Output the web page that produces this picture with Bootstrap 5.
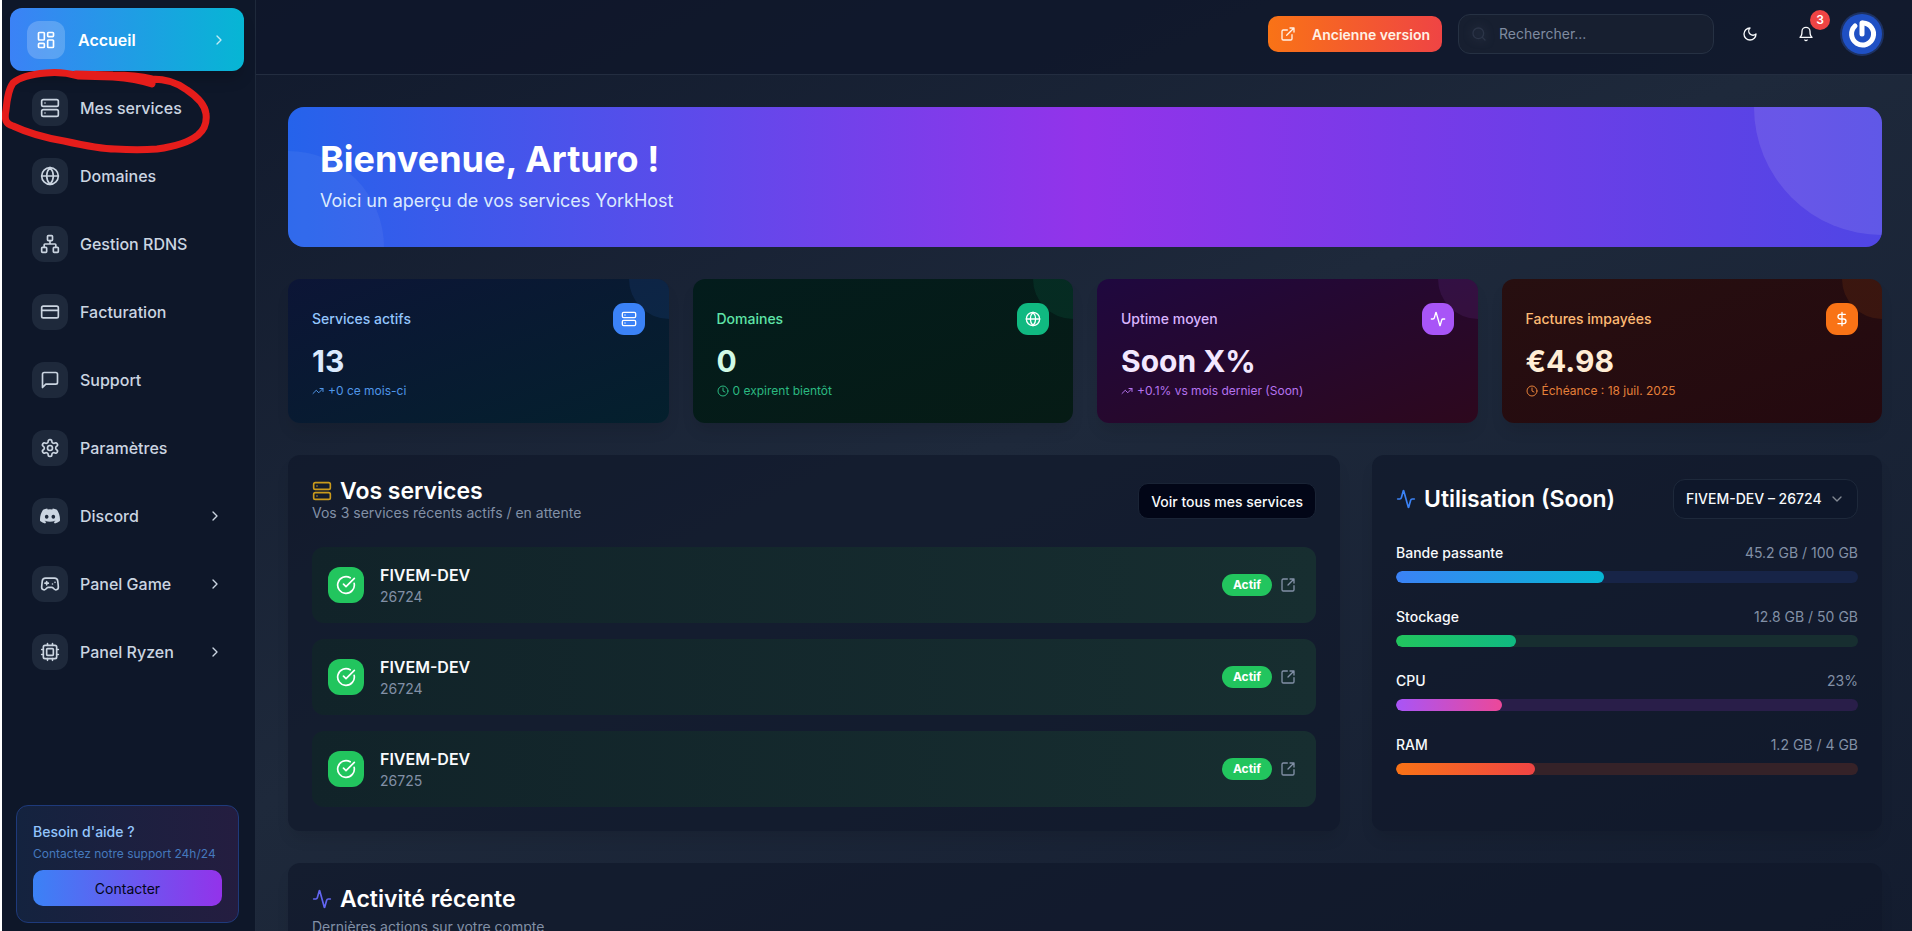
<!DOCTYPE html>
<html lang="fr" data-bs-theme="dark">
<head>
<meta charset="utf-8">
<meta name="viewport" content="width=device-width, initial-scale=1">
<title>YorkHost – Accueil</title>
<link href="https://cdn.jsdelivr.net/npm/bootstrap@5.3.0/dist/css/bootstrap.min.css" rel="stylesheet">
<style>
  body { font-family: Inter, "Liberation Sans", sans-serif; font-size: 14px; line-height: 20px; color: #f8fafc; background: #fff; padding-left: 2px; }
  a { text-decoration: none; color: inherit; }
  .icon { width: 16px; height: 16px; flex: none; fill: none; stroke: currentColor; stroke-width: 2; stroke-linecap: round; stroke-linejoin: round; }
  .icon-12 { width: 12px; height: 12px; }
  .icon-20 { width: 20px; height: 20px; }
  .shell { background: linear-gradient(to bottom right, #0f172a, #1e293b 50%, #0f172a 120%); }

  /* Sidebar */
  .sidebar { width: 254px; flex: none; background: #0e1729; border-right: 1px solid #1e293b; padding: 10px 16px 8px 14px; }
  .menu { gap: 8px; }
  .menu-item { height: 60px; padding: 0 16px; gap: 12px; font-size: 16px; font-weight: 500; color: #cbd5e1; border-radius: 12px; }
  .menu-tile { width: 36px; height: 36px; border-radius: 12px; background: #1e293b; flex: none; display: grid; place-items: center; }
  .menu-item.current { height: 63px; margin: -2px -5px -1px -6px; padding: 0 17px; gap: 13px; font-weight: 600; color: #fff; background: linear-gradient(to right, #3b82f6, #06b6d4); box-shadow: 0 10px 15px -3px rgba(0,0,0,.2); }
  .current .menu-tile { width: 38px; height: 38px; background: rgba(255,255,255,.2); }
  .help { border: 1px solid #1e3a7b; border-radius: 12px; padding: 16px; background: linear-gradient(to right, #14233f, #241d40); }
  .help-title { font-weight: 500; color: #93c5fd; }
  .help-note { font-size: 12px; line-height: 16px; color: #4579bd; margin: 4px 0 8px; }
  .btn-contact { height: 36px; padding: 0; border: 0; border-radius: 10px; font-size: 14px; color: #020617; background: linear-gradient(to right, #3b82f6, #9333ea); }
  .marker { position: absolute; left: 0; top: 66px; width: 212px; height: 92px; pointer-events: none; fill: none; stroke: #e51d1b; stroke-width: 7; stroke-linecap: round; stroke-linejoin: round; }

  /* Top bar */
  .topbar { height: 75px; flex: none; padding: 14px 30px 0 32px; background: rgba(15,23,42,.8); border-bottom: 1px solid #232d40; }
  .btn-old { height: 36px; padding: 0 12px; gap: 16px; border: 0; border-radius: 10px; font-size: 14px; font-weight: 600; color: #fff1e6; background: linear-gradient(to right, #f97316, #ef4444); }
  .search-box { width: 256px; height: 40px; padding: 0 12px; gap: 10px; border: 1px solid #263143; border-radius: 12px; background: #171f30; color: #2c3548; }
  .search-box .icon { filter: drop-shadow(0 0 4px #3a4356); }
  .search-box input { min-width: 0; border: 0; outline: 0; background: none; color: #f8fafc; font-size: 14px; }
  .search-box input::placeholder { color: #7f8ba0; }
  .btn-round { position: relative; width: 40px; height: 40px; padding: 0; border: 0; color: #f8fafc; }
  .count { position: absolute; top: -4px; right: -4px; width: 20px; height: 20px; border-radius: 50%; background: #ef4444; color: #fff; font-size: 12px; line-height: 20px; font-weight: 600; }
  .avatar { width: 40px; height: 40px; border-radius: 50%; box-shadow: 0 0 0 2px #1d3263; background: #1f50c4; overflow: hidden; }

  /* Content */
  .content { padding: 32px 30px 32px 32px; gap: 32px; }
  .welcome { position: relative; overflow: hidden; padding: 32px; border-radius: 16px; background: linear-gradient(to right, #2563eb, #9333ea, #4f46e5); }
  .welcome::before, .welcome::after, .stat::after { content: ""; position: absolute; border-radius: 50%; }
  .welcome::before { width: 256px; height: 256px; top: -128px; right: -128px; background: rgba(255,255,255,.1); }
  .welcome::after { width: 192px; height: 192px; bottom: -96px; left: -96px; background: rgba(255,255,255,.05); }
  .welcome h1 { position: relative; font-size: 36px; line-height: 40px; font-weight: 700; margin: 0 0 8px; }
  .welcome p { position: relative; font-size: 18px; line-height: 28px; margin: 0; color: #dbeafe; }

  .stats { display: grid; grid-template-columns: repeat(4, 1fr); gap: 24px; }
  .stat, .panel { box-shadow: 0 10px 15px -3px rgba(0,0,0,.1); border-radius: 12px; }
  .stat { position: relative; overflow: hidden; padding: 24px; }
  .stat::after { width: 80px; height: 80px; top: -40px; right: -40px; background: var(--tile); opacity: .1; }
  .stat-head { height: 32px; margin-bottom: 8px; font-weight: 500; color: var(--label); }
  .stat-tile { position: relative; z-index: 1; width: 32px; height: 32px; border-radius: 11px; color: #fff; background: var(--tile); display: grid; place-items: center; }
  .stat-value { font-size: 30px; line-height: 36px; font-weight: 700; color: var(--value); }
  .stat-note { margin-top: 4px; gap: 4px; font-size: 12px; line-height: 16px; color: var(--note); }
  .stat-blue { --label:#93c5fd; --value:#dbeafe; --note:#5096e8; --tile:#3b82f6; background: linear-gradient(to bottom right, #0c1536, #04202d); }
  .stat-green { --label:#5fe3a8; --value:#d1fae5; --note:#2bb981; --tile:#10b981; background: linear-gradient(to bottom right, #031c1c, #061b15); }
  .stat-purple { --label:#d8b4fe; --value:#f3e8ff; --note:#b573ee; --tile:#a855f7; background: linear-gradient(to bottom right, #1f083f, #2d081d); }
  .stat-orange { --label:#fdba74; --value:#ffedd5; --note:#e5803a; --tile:#f97316; background: linear-gradient(to bottom right, #270f10, #24090f); }

  .panels { display: grid; grid-template-columns: repeat(3, 1fr); column-gap: 32px; }
  .panels > * { min-width: 0; }
  .panel-wide { grid-column: span 2; }
  .panel { padding: 24px; background: rgba(15,23,42,.65); }
  .panel-title { font-size: 23px; line-height: 24px; font-weight: 600; gap: 8px; margin: 0; }
  .muted-text { color: #8290a6; }
  .btn-all { height: 36px; padding: 0 12px; border: 1px solid #1a2436; border-radius: 10px; font-size: 14px; font-weight: 500; background: #020617; color: #f8fafc; }
  .service { height: 76px; padding: 0 20px 0 16px; gap: 16px; border-radius: 12px; background: linear-gradient(to right, #112329, #172e30); }
  .service-tile { width: 36px; height: 36px; border-radius: 12px; background: #22c55e; color: #fff; display: grid; place-items: center; }
  .service-name { font-size: 16px; line-height: 24px; font-weight: 600; }
  .state { width: 50px; height: 22px; line-height: 22px; border-radius: 11px; background: #22c55e; color: #fff; font-size: 12px; font-weight: 700; text-align: center; }
  .picker { position: relative; }
  .picker select { appearance: none; width: 185px; height: 40px; padding: 0 12px; border: 1px solid #1e293b; border-radius: 12px; background: #0e172a; color: #f8fafc; font-size: 14px; font-weight: 500; }
  .picker .icon { position: absolute; right: 13px; top: 12px; opacity: .5; pointer-events: none; }
  .usage { gap: 24px; padding-top: 24px; }
  .usage-label { font-weight: 500; }
  .meter { height: 12px; margin-top: 8px; border-radius: 6px; background: var(--track); }
  .meter .progress-bar { border-radius: 6px; background: linear-gradient(to right, var(--from), var(--to)); }
</style>
</head>
<body>
<svg class="d-none" xmlns="http://www.w3.org/2000/svg">
  <symbol id="i-dash" viewBox="0 0 24 24"><rect x="3" y="3" width="7" height="9" rx="1"/><rect x="14" y="3" width="7" height="5" rx="1"/><rect x="14" y="12" width="7" height="9" rx="1"/><rect x="3" y="16" width="7" height="5" rx="1"/></symbol>
  <symbol id="i-server" viewBox="0 0 24 24"><rect x="2" y="2" width="20" height="8" rx="2"/><rect x="2" y="14" width="20" height="8" rx="2"/><path d="M6 6h.01M6 18h.01"/></symbol>
  <symbol id="i-globe" viewBox="0 0 24 24"><circle cx="12" cy="12" r="10"/><path d="M12 2a14.5 14.5 0 0 0 0 20 14.5 14.5 0 0 0 0-20M2 12h20"/></symbol>
  <symbol id="i-network" viewBox="0 0 24 24"><rect x="16" y="16" width="6" height="6" rx="1"/><rect x="2" y="16" width="6" height="6" rx="1"/><rect x="9" y="2" width="6" height="6" rx="1"/><path d="M5 16v-3a1 1 0 0 1 1-1h12a1 1 0 0 1 1 1v3M12 12V8"/></symbol>
  <symbol id="i-card" viewBox="0 0 24 24"><rect x="2" y="5" width="20" height="14" rx="2"/><path d="M2 10h20"/></symbol>
  <symbol id="i-message" viewBox="0 0 24 24"><path d="M21 15a2 2 0 0 1-2 2H7l-4 4V5a2 2 0 0 1 2-2h14a2 2 0 0 1 2 2z"/></symbol>
  <symbol id="i-gear" viewBox="0 0 24 24"><path d="M12.22 2h-.44a2 2 0 0 0-2 2v.18a2 2 0 0 1-1 1.73l-.43.25a2 2 0 0 1-2 0l-.15-.08a2 2 0 0 0-2.73.73l-.22.38a2 2 0 0 0 .73 2.73l.15.1a2 2 0 0 1 1 1.72v.51a2 2 0 0 1-1 1.74l-.15.09a2 2 0 0 0-.73 2.73l.22.38a2 2 0 0 0 2.73.73l.15-.08a2 2 0 0 1 2 0l.43.25a2 2 0 0 1 1 1.73V20a2 2 0 0 0 2 2h.44a2 2 0 0 0 2-2v-.18a2 2 0 0 1 1-1.73l.43-.25a2 2 0 0 1 2 0l.15.08a2 2 0 0 0 2.73-.73l.22-.39a2 2 0 0 0-.73-2.73l-.15-.08a2 2 0 0 1-1-1.74v-.5a2 2 0 0 1 1-1.74l.15-.09a2 2 0 0 0 .73-2.73l-.22-.38a2 2 0 0 0-2.73-.73l-.15.08a2 2 0 0 1-2 0l-.43-.25a2 2 0 0 1-1-1.73V4a2 2 0 0 0-2-2z"/><circle cx="12" cy="12" r="3"/></symbol>
  <symbol id="i-discord" viewBox="0 0 24 24"><path fill="currentColor" stroke="none" d="M20.317 4.37a19.8 19.8 0 0 0-4.885-1.515.07.07 0 0 0-.079.037c-.21.375-.444.864-.608 1.25a18.3 18.3 0 0 0-5.487 0 12.6 12.6 0 0 0-.617-1.25.08.08 0 0 0-.079-.037A19.7 19.7 0 0 0 3.677 4.37a.07.07 0 0 0-.032.027C.533 9.046-.32 13.58.099 18.057a.08.08 0 0 0 .031.057 19.9 19.9 0 0 0 5.993 3.03.08.08 0 0 0 .084-.028 14 14 0 0 0 1.226-1.994.076.076 0 0 0-.041-.106 13 13 0 0 1-1.872-.892.077.077 0 0 1-.008-.128q.19-.141.372-.292a.07.07 0 0 1 .077-.01c3.928 1.793 8.18 1.793 12.062 0a.07.07 0 0 1 .078.01q.18.149.373.292a.077.077 0 0 1-.006.127 12.3 12.3 0 0 1-1.873.892.077.077 0 0 0-.041.107c.36.698.772 1.362 1.225 1.993a.08.08 0 0 0 .084.028 19.8 19.8 0 0 0 6.002-3.03.08.08 0 0 0 .032-.054c.5-5.177-.838-9.674-3.549-13.66a.06.06 0 0 0-.031-.03zM8.02 15.33c-1.183 0-2.157-1.085-2.157-2.419s.956-2.419 2.157-2.419c1.21 0 2.176 1.096 2.157 2.42 0 1.333-.956 2.418-2.157 2.418m7.975 0c-1.183 0-2.157-1.085-2.157-2.419s.955-2.419 2.157-2.419c1.21 0 2.176 1.096 2.157 2.42 0 1.333-.946 2.418-2.157 2.418"/></symbol>
  <symbol id="i-pad" viewBox="0 0 24 24"><path d="M6 11h4M8 9v4M15 12h.01M18 10h.01M17.32 5H6.68a4 4 0 0 0-3.978 3.59c-.006.052-.01.101-.017.152C2.604 9.416 2 14.456 2 16a3 3 0 0 0 3 3c1 0 1.5-.5 2-1l1.414-1.414A2 2 0 0 1 9.828 16h4.344a2 2 0 0 1 1.414.586L17 18c.5.5 1 1 2 1a3 3 0 0 0 3-3c0-1.545-.604-6.584-.685-7.258-.007-.05-.011-.1-.017-.151A4 4 0 0 0 17.32 5z"/></symbol>
  <symbol id="i-cpu" viewBox="0 0 24 24"><rect x="4" y="4" width="16" height="16" rx="2"/><rect x="8" y="8" width="8" height="8" rx="1"/><path d="M15 2v2M15 20v2M2 15h2M2 9h2M20 15h2M20 9h2M9 2v2M9 20v2"/></symbol>
  <symbol id="i-right" viewBox="0 0 24 24"><path d="m9 18 6-6-6-6"/></symbol>
  <symbol id="i-down" viewBox="0 0 24 24"><path d="m6 9 6 6 6-6"/></symbol>
  <symbol id="i-ext" viewBox="0 0 24 24"><path d="M18 13v6a2 2 0 0 1-2 2H5a2 2 0 0 1-2-2V8a2 2 0 0 1 2-2h6M15 3h6v6M10 14 21 3"/></symbol>
  <symbol id="i-ext-box" viewBox="0 0 24 24"><path d="M21 13v6a2 2 0 0 1-2 2H5a2 2 0 0 1-2-2V5a2 2 0 0 1 2-2h6M15 3h6v6M12 12l9-9"/></symbol>
  <symbol id="i-search" viewBox="0 0 24 24"><circle cx="11" cy="11" r="8"/><path d="m21 21-4.3-4.3"/></symbol>
  <symbol id="i-moon" viewBox="0 0 24 24"><path d="M12 3a6 6 0 0 0 9 9 9 9 0 1 1-9-9z"/></symbol>
  <symbol id="i-bell" viewBox="0 0 24 24"><path d="M6 8a6 6 0 0 1 12 0c0 7 3 9 3 9H3s3-2 3-9M10.3 21a1.94 1.94 0 0 0 3.4 0"/></symbol>
  <symbol id="i-pulse" viewBox="0 0 24 24"><path d="M22 12h-2.48a2 2 0 0 0-1.93 1.46l-2.35 8.36a.25.25 0 0 1-.48 0L9.24 2.18a.25.25 0 0 0-.48 0l-2.35 8.36A2 2 0 0 1 4.49 12H2"/></symbol>
  <symbol id="i-dollar" viewBox="0 0 24 24"><path d="M12 2v20M17 5H9.5a3.5 3.5 0 0 0 0 7h5a3.5 3.5 0 0 1 0 7H6"/></symbol>
  <symbol id="i-trend" viewBox="0 0 24 24"><path d="m22 7-8.5 8.5-5-5L2 17M16 7h6v6"/></symbol>
  <symbol id="i-clock" viewBox="0 0 24 24"><circle cx="12" cy="12" r="10"/><path d="M12 6v6l4 2"/></symbol>
  <symbol id="i-check" viewBox="0 0 24 24"><path d="M21.8 10A10 10 0 1 1 17 3.34M9 11l3 3L22 4"/></symbol>
</svg>

<div class="shell d-flex vh-100 overflow-hidden position-relative">
  <aside class="sidebar d-flex flex-column justify-content-between">
    <nav class="menu d-flex flex-column" aria-label="Menu principal">
      <a href="#" class="menu-item current d-flex align-items-center" aria-current="page"><span class="menu-tile"><svg class="icon icon-20"><use href="#i-dash"/></svg></span>Accueil<svg class="icon ms-auto opacity-75"><use href="#i-right"/></svg></a>
      <a href="#" class="menu-item d-flex align-items-center"><span class="menu-tile"><svg class="icon icon-20"><use href="#i-server"/></svg></span>Mes services</a>
      <a href="#" class="menu-item d-flex align-items-center"><span class="menu-tile"><svg class="icon icon-20"><use href="#i-globe"/></svg></span>Domaines</a>
      <a href="#" class="menu-item d-flex align-items-center"><span class="menu-tile"><svg class="icon icon-20"><use href="#i-network"/></svg></span>Gestion RDNS</a>
      <a href="#" class="menu-item d-flex align-items-center"><span class="menu-tile"><svg class="icon icon-20"><use href="#i-card"/></svg></span>Facturation</a>
      <a href="#" class="menu-item d-flex align-items-center"><span class="menu-tile"><svg class="icon icon-20"><use href="#i-message"/></svg></span>Support</a>
      <a href="#" class="menu-item d-flex align-items-center"><span class="menu-tile"><svg class="icon icon-20"><use href="#i-gear"/></svg></span>Paramètres</a>
      <a href="#" class="menu-item d-flex align-items-center"><span class="menu-tile"><svg class="icon icon-20"><use href="#i-discord"/></svg></span>Discord<svg class="icon ms-auto"><use href="#i-right"/></svg></a>
      <a href="#" class="menu-item d-flex align-items-center"><span class="menu-tile"><svg class="icon icon-20"><use href="#i-pad"/></svg></span>Panel Game<svg class="icon ms-auto"><use href="#i-right"/></svg></a>
      <a href="#" class="menu-item d-flex align-items-center"><span class="menu-tile"><svg class="icon icon-20"><use href="#i-cpu"/></svg></span>Panel Ryzen<svg class="icon ms-auto"><use href="#i-right"/></svg></a>
    </nav>
    <div class="help">
      <div class="help-title">Besoin d'aide ?</div>
      <div class="help-note">Contactez notre support 24h/24</div>
      <button type="button" class="btn btn-contact w-100">Contacter</button>
    </div>
  </aside>

  <div class="flex-grow-1 d-flex flex-column overflow-hidden">
    <header class="topbar d-flex align-items-start justify-content-end">
      <div class="d-flex align-items-center gap-3">
        <button type="button" class="btn btn-old d-flex align-items-center"><svg class="icon"><use href="#i-ext"/></svg>Ancienne version</button>
        <label class="search-box d-flex align-items-center"><svg class="icon"><use href="#i-search"/></svg><input type="search" placeholder="Rechercher..." aria-label="Rechercher"></label>
        <button type="button" class="btn btn-round d-grid" aria-label="Thème"><svg class="icon m-auto"><use href="#i-moon"/></svg></button>
        <button type="button" class="btn btn-round d-grid" aria-label="Notifications"><svg class="icon m-auto"><use href="#i-bell"/></svg><span class="count">3</span></button>
        <a href="#" class="avatar" aria-label="Profil"><svg class="d-block" width="40" height="40" viewBox="0 0 40 40" fill="none" stroke="#fff" stroke-width="5" stroke-linecap="round"><path d="M13 12a11 11 0 1 0 8-3"/><path d="M20 9v11"/></svg></a>
      </div>
    </header>

    <main class="content d-flex flex-column">
      <section class="welcome">
        <h1>Bienvenue, Arturo !</h1>
        <p>Voici un aperçu de vos services YorkHost</p>
      </section>

      <section class="stats">
        <div class="stat stat-blue">
          <div class="stat-head d-flex align-items-center justify-content-between">Services actifs<span class="stat-tile"><svg class="icon"><use href="#i-server"/></svg></span></div>
          <div class="stat-value">13</div>
          <div class="stat-note d-flex align-items-center"><svg class="icon icon-12"><use href="#i-trend"/></svg>+0 ce mois-ci</div>
        </div>
        <div class="stat stat-green">
          <div class="stat-head d-flex align-items-center justify-content-between">Domaines<span class="stat-tile"><svg class="icon"><use href="#i-globe"/></svg></span></div>
          <div class="stat-value">0</div>
          <div class="stat-note d-flex align-items-center"><svg class="icon icon-12"><use href="#i-clock"/></svg>0 expirent bientôt</div>
        </div>
        <div class="stat stat-purple">
          <div class="stat-head d-flex align-items-center justify-content-between">Uptime moyen<span class="stat-tile"><svg class="icon"><use href="#i-pulse"/></svg></span></div>
          <div class="stat-value">Soon X%</div>
          <div class="stat-note d-flex align-items-center"><svg class="icon icon-12"><use href="#i-trend"/></svg>+0.1% vs mois dernier (Soon)</div>
        </div>
        <div class="stat stat-orange">
          <div class="stat-head d-flex align-items-center justify-content-between">Factures impayées<span class="stat-tile"><svg class="icon"><use href="#i-dollar"/></svg></span></div>
          <div class="stat-value">€4.98</div>
          <div class="stat-note d-flex align-items-center"><svg class="icon icon-12"><use href="#i-clock"/></svg>Échéance : 18 juil. 2025</div>
        </div>
      </section>

      <div class="panels">
        <section class="panel panel-wide">
          <div class="d-flex align-items-center justify-content-between mb-4">
            <div>
              <h2 class="panel-title d-flex align-items-center"><svg class="icon icon-20" style="color:#c99a1c"><use href="#i-server"/></svg>Vos services</h2>
              <div class="muted-text">Vos 3 services récents actifs / en attente</div>
            </div>
            <button type="button" class="btn btn-all">Voir tous mes services</button>
          </div>
          <div class="d-flex flex-column gap-3">
            <div class="service d-flex align-items-center">
              <span class="service-tile"><svg class="icon icon-20"><use href="#i-check"/></svg></span>
              <div class="flex-grow-1"><div class="service-name">FIVEM-DEV</div><div class="muted-text">26724</div></div>
              <div class="d-flex align-items-center gap-2"><span class="state">Actif</span><a href="#" class="muted-text d-flex" aria-label="Ouvrir"><svg class="icon"><use href="#i-ext-box"/></svg></a></div>
            </div>
            <div class="service d-flex align-items-center">
              <span class="service-tile"><svg class="icon icon-20"><use href="#i-check"/></svg></span>
              <div class="flex-grow-1"><div class="service-name">FIVEM-DEV</div><div class="muted-text">26724</div></div>
              <div class="d-flex align-items-center gap-2"><span class="state">Actif</span><a href="#" class="muted-text d-flex" aria-label="Ouvrir"><svg class="icon"><use href="#i-ext-box"/></svg></a></div>
            </div>
            <div class="service d-flex align-items-center">
              <span class="service-tile"><svg class="icon icon-20"><use href="#i-check"/></svg></span>
              <div class="flex-grow-1"><div class="service-name">FIVEM-DEV</div><div class="muted-text">26725</div></div>
              <div class="d-flex align-items-center gap-2"><span class="state">Actif</span><a href="#" class="muted-text d-flex" aria-label="Ouvrir"><svg class="icon"><use href="#i-ext-box"/></svg></a></div>
            </div>
          </div>
        </section>

        <section class="panel">
          <div class="d-flex align-items-center justify-content-between">
            <h2 class="panel-title d-flex align-items-center"><svg class="icon icon-20" style="color:#3b82f6"><use href="#i-pulse"/></svg>Utilisation (Soon)</h2>
            <div class="picker"><select aria-label="Service"><option>FIVEM-DEV – 26724</option></select><svg class="icon"><use href="#i-down"/></svg></div>
          </div>
          <div class="usage d-flex flex-column">
            <div>
              <div class="d-flex justify-content-between"><span class="usage-label">Bande passante</span><span class="muted-text">45.2 GB / 100 GB</span></div>
              <div class="progress meter" style="--track:#172447;--from:#3b82f6;--to:#06b6d4"><div class="progress-bar" style="width:45%"></div></div>
            </div>
            <div>
              <div class="d-flex justify-content-between"><span class="usage-label">Stockage</span><span class="muted-text">12.8 GB / 50 GB</span></div>
              <div class="progress meter" style="--track:#172e30;--from:#22c55e;--to:#10b981"><div class="progress-bar" style="width:26%"></div></div>
            </div>
            <div>
              <div class="d-flex justify-content-between"><span class="usage-label">CPU</span><span class="muted-text">23%</span></div>
              <div class="progress meter" style="--track:#291e49;--from:#a855f7;--to:#ec4899"><div class="progress-bar" style="width:23%"></div></div>
            </div>
            <div>
              <div class="d-flex justify-content-between"><span class="usage-label">RAM</span><span class="muted-text">1.2 GB / 4 GB</span></div>
              <div class="progress meter" style="--track:#352228;--from:#f97316;--to:#ef4444"><div class="progress-bar" style="width:30%"></div></div>
            </div>
          </div>
        </section>
      </div>

      <section class="panel d-flex flex-column" style="row-gap:6px">
        <h2 class="panel-title d-flex align-items-center"><svg class="icon icon-20" style="color:#6366f1"><use href="#i-pulse"/></svg>Activité récente</h2>
        <div class="muted-text">Dernières actions sur votre compte</div>
      </section>
    </main>
  </div>

  <!-- hand-drawn ring around "Mes services" -->
  <svg class="marker" viewBox="2 66 212 92" aria-hidden="true"><path d="M152 84C140 80 126 78 113 77L78 76C68 73 56 72 46 73C34 74 21 76 13 83C8 90 7 100 6 110C4 120 6 124 13 126C28 133 46 138 64 141C82 145 100 149 115 149C130 150 145 150 157 149C172 147 188 143 198 135C205 129 207 122 206 114C205 104 196 96 187 90C178 83 166 79 152 79C140 76 125 75 113 75L76 74"/></svg>
</div>
<script src="https://cdn.jsdelivr.net/npm/bootstrap@5.3.0/dist/js/bootstrap.bundle.min.js"></script>
</body>
</html>
